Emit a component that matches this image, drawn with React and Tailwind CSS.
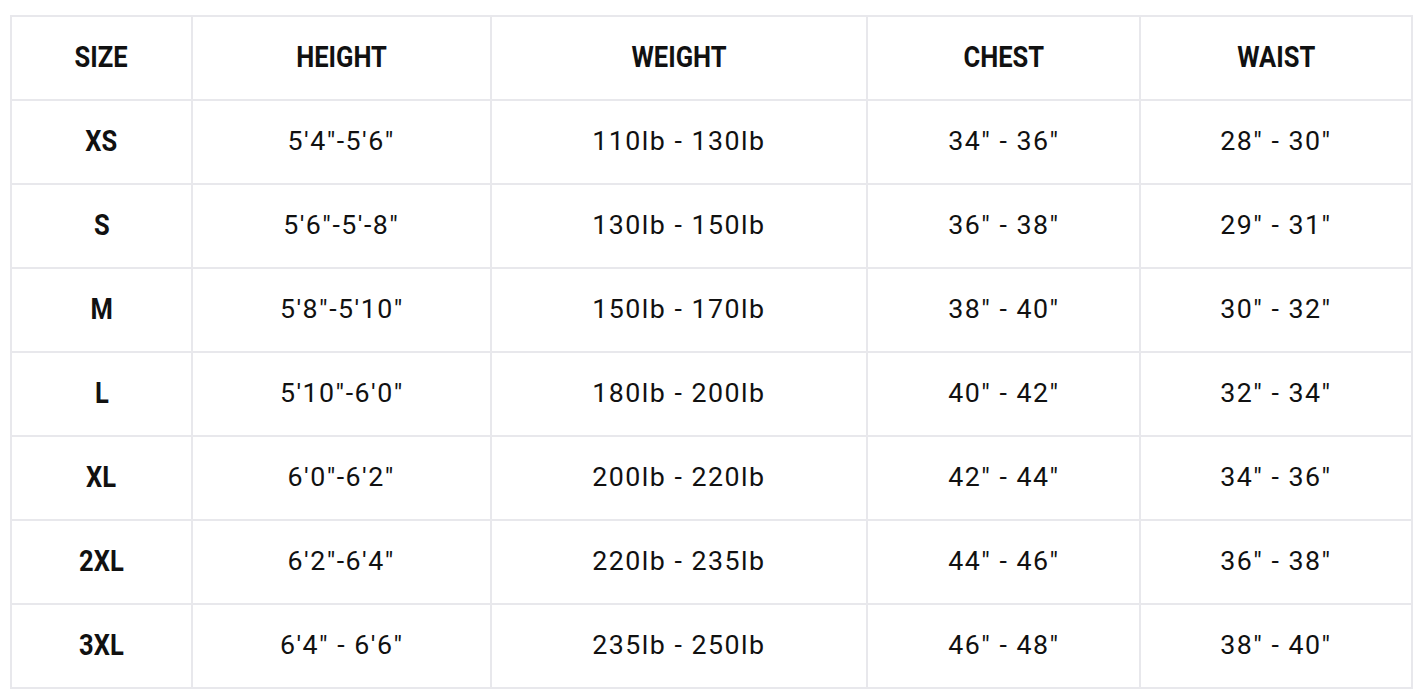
import React from 'react';

const headers = ['SIZE', 'HEIGHT', 'WEIGHT', 'CHEST', 'WAIST'];

const rows = [
  ['XS', `5'4"-5'6"`, '110lb - 130lb', '34" - 36"', '28" - 30"'],
  ['S', `5'6"-5'-8"`, '130lb - 150lb', '36" - 38"', '29" - 31"'],
  ['M', `5'8"-5'10"`, '150lb - 170lb', '38" - 40"', '30" - 32"'],
  ['L', `5'10"-6'0"`, '180lb - 200lb', '40" - 42"', '32" - 34"'],
  ['XL', `6'0"-6'2"`, '200lb - 220lb', '42" - 44"', '34" - 36"'],
  ['2XL', `6'2"-6'4"`, '220lb - 235lb', '44" - 46"', '36" - 38"'],
  ['3XL', `6'4" - 6'6"`, '235lb - 250lb', '46" - 48"', '38" - 40"'],
];

const colWidths = ['w-[181px]', 'w-[299px]', 'w-[376px]', 'w-[273px]', 'w-[272px]'];

// bold labels are a narrow DIN-like face in the picture, squeeze Roboto a bit
const Bold = ({ children }) => (
  <span className="inline-block scale-x-[0.88] font-bold text-[29px] tracking-normal">{children}</span>
);

// values are wider set, stretch a little
const Value = ({ children }) => (
  <span className="inline-block scale-x-[1.07] tracking-[0.055em]">{children}</span>
);

export default function App() {
  return (
    <div className="bg-white w-[1420px] h-[700px] pt-[15px] pl-[10px]">
      <table className="border-collapse font-['Roboto',sans-serif] text-[#111] text-[25px]">
        <thead>
          <tr className="h-[84px]">
            {headers.map((h, i) => (
              <th key={h} className={`${colWidths[i]} border-2 border-[#e8e8ec] text-center`}>
                <Bold>{h}</Bold>
              </th>
            ))}
          </tr>
        </thead>
        <tbody>
          {rows.map((row) => (
            <tr key={row[0]} className="h-[84px]">
              {row.map((cell, i) => (
                <td key={i} className="border-2 border-[#e8e8ec] text-center font-normal">
                  {i === 0 ? <Bold>{cell}</Bold> : <Value>{cell}</Value>}
                </td>
              ))}
            </tr>
          ))}
        </tbody>
      </table>
    </div>
  );
}
